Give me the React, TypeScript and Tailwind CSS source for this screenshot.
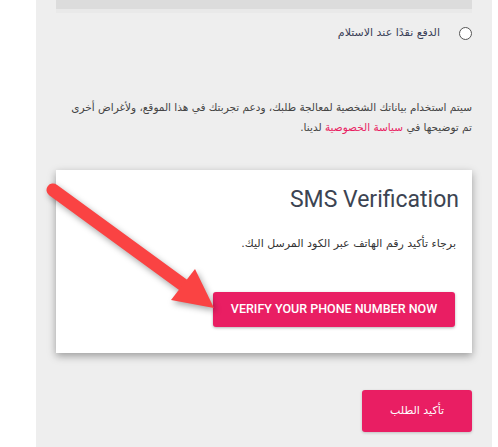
import React from "react";

const Arrow = () => (
  <svg
    className="absolute left-0 top-0 pointer-events-none"
    width="498"
    height="447"
    viewBox="0 0 498 447"
    style={{ filter: "drop-shadow(2px 3px 3px rgba(0,0,0,0.35))" }}
  >
    <line x1="53" y1="190" x2="186" y2="287" stroke="#fa4343" strokeWidth="13" strokeLinecap="round" />
    <polygon points="171,300 195,269 214,308" fill="#fa4343" />
  </svg>
);

const App = () => {
  const arabic = { fontFamily: '"DejaVu Sans", "Liberation Sans", sans-serif' };
  return (
    <div className="relative w-[498px] h-[447px] bg-white flex overflow-hidden">
      <div className="w-[36px] shrink-0" />
      <div dir="rtl" className="w-[456px] h-full bg-[#eeeeee] px-[20px]" style={arabic}>
        <div className="h-[9px] bg-[#dcdcdc]" />
        <div className="h-[4px] bg-[#e9e9e9]" />

        <div className="flex items-center gap-[19px] mt-[13px] h-[14px]">
          <span className="w-[13px] h-[13px] rounded-full border border-[#555] bg-white shrink-0" />
          <span className="text-[11px] text-[#3a3f58]">الدفع نقدًا عند الاستلام</span>
        </div>

        <p className="mt-[57px] text-[10.5px] leading-[20px] text-[#444] whitespace-nowrap">
          سيتم استخدام بياناتك الشخصية لمعالجة طلبك، ودعم تجربتك في هذا الموقع، ولأغراض أخرى
          <br />
          تم توضيحها في <span className="text-[#e91e63]">سياسة الخصوصية</span> لدينا.
        </p>

        <div className="mt-[33px] bg-white h-[183px] pr-[13px] pl-[16px] pt-[14px] shadow-[0_3px_8px_rgba(0,0,0,0.35)]">
          <h2
            dir="ltr"
            className="text-right text-[23px] leading-[32px] text-[#3c4452]"
            style={{ fontFamily: "Roboto, sans-serif" }}
          >
            SMS Verification
          </h2>
          <p className="mt-[19px] pr-[3px] text-[11px] leading-[18px] text-[#333]">
            برجاء تأكيد رقم الهاتف عبر الكود المرسل اليك.
          </p>
          <div className="mt-[39px] flex pr-[4px]">
            <button
              className="h-[35px] w-[242px] bg-[#e91e63] text-white rounded-[3px] text-[12.5px] font-medium uppercase shadow-[0_1px_3px_rgba(0,0,0,0.3)]"
              style={{ fontFamily: "Roboto, sans-serif" }}
            >
              Verify your phone number now
            </button>
          </div>
        </div>

        <div className="mt-[37px] flex">
          <button className="h-[42px] w-[110px] bg-[#e91e63] text-white rounded-[3px] text-[11px] shadow-[0_1px_3px_rgba(0,0,0,0.2)]">
            تأكيد الطلب
          </button>
        </div>
      </div>
      <Arrow />
    </div>
  );
};

export default App;
